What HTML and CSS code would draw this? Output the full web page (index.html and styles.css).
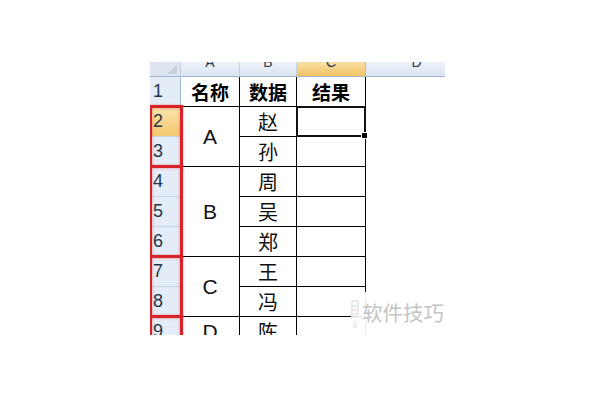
FILE: index.html
```html
<!DOCTYPE html>
<html lang="zh">
<head>
<meta charset="utf-8">
<link rel="stylesheet" href="styles.css">
</head>
<body>
<div class="page">
  <div class="sheet">
    <div class="grid">
      <div class="corner"><span class="tri"></span></div>
      <div class="ch"><span>A</span></div>
      <div class="ch"><span>B</span></div>
      <div class="ch sel"><span>C</span></div>
      <div class="ch"><span>D</span></div>

      <div class="rh">1</div>
      <div class="c head">名称</div>
      <div class="c head">数据</div>
      <div class="c head">结果</div>
      <div class="d"></div>

      <div class="rh sel grp g2">2</div>
      <div class="c m2">A</div>
      <div class="c">赵</div>
      <div class="c cur"></div>
      <div class="d"></div>

      <div class="rh">3</div>
      <div class="c">孙</div>
      <div class="c"></div>
      <div class="d"></div>

      <div class="rh grp g3">4</div>
      <div class="c m3">B</div>
      <div class="c">周</div>
      <div class="c"></div>
      <div class="d"></div>

      <div class="rh">5</div>
      <div class="c">吴</div>
      <div class="c"></div>
      <div class="d"></div>

      <div class="rh">6</div>
      <div class="c">郑</div>
      <div class="c"></div>
      <div class="d"></div>

      <div class="rh grp g2">7</div>
      <div class="c m2">C</div>
      <div class="c">王</div>
      <div class="c"></div>
      <div class="d"></div>

      <div class="rh">8</div>
      <div class="c">冯</div>
      <div class="c"></div>
      <div class="d"></div>

      <div class="rh grp g3">9</div>
      <div class="c m1">D</div>
      <div class="c">陈</div>
      <div class="c"></div>
      <div class="d"></div>
    </div>
  </div>
  <div class="wm">
    <svg class="wm-icon" width="8" height="30" viewBox="0 0 8 30">
      <rect x="1" y="1" width="6" height="16" fill="none" stroke="#d6d6d6" stroke-width="1"/>
      <line x1="2" y1="6" x2="6" y2="6" stroke="#d6d6d6"/>
      <line x1="2" y1="10" x2="6" y2="10" stroke="#d6d6d6"/>
      <line x1="2" y1="14" x2="6" y2="14" stroke="#d6d6d6"/>
      <line x1="3" y1="21" x2="3" y2="28" stroke="#e0e0e0"/>
      <line x1="5" y1="21" x2="5" y2="28" stroke="#e0e0e0"/>
    </svg>
    <span class="wm-text">软件技巧</span>
  </div>
</div>
</body>
</html>
```

FILE: styles.css
```css
html, body {
  margin: 0;
  padding: 0;
  background: #fff;
}
.page {
  position: relative;
  width: 600px;
  height: 400px;
  padding: 62px 0 0 150px;
  box-sizing: border-box;
}
.sheet {
  width: 295px;
  height: 273px;
  overflow: hidden;
}
.grid {
  display: grid;
  grid-template-columns: 31px 59px 57px 69px 102px;
  grid-template-rows: 15px repeat(9, 30px);
  font-family: "Noto Sans CJK SC", "Liberation Sans", sans-serif;
}
.corner {
  background: #dfe5ee;
  border-right: 1px solid #c3cfdf;
  border-bottom: 1px solid #9eb6ce;
  box-sizing: border-box;
  position: relative;
  overflow: hidden;
}
.tri {
  position: absolute;
  right: 3px;
  bottom: 2px;
  width: 0;
  height: 0;
  border-left: 10px solid transparent;
  border-bottom: 9px solid #c6d0dc;
}
.ch {
  background: linear-gradient(#eef3fa, #dae4f2);
  border-right: 1px solid #c3d1e3;
  border-bottom: 1px solid #9eb6ce;
  box-sizing: border-box;
  overflow: hidden;
  text-align: center;
  font-family: "Liberation Sans", sans-serif;
  font-size: 14px;
  color: #2c3a4c;
}
.ch span {
  display: block;
  line-height: 8px;
  margin-top: -4px;
}
.ch.sel {
  background: linear-gradient(#f9dea6, #f1c462);
  border-right-color: #e0b860;
}
.rh {
  background: #e4ecf7;
  border-right: 1px solid #9eb6ce;
  border-bottom: 1px solid #c3d1e3;
  box-sizing: border-box;
  font-family: "Liberation Sans", sans-serif;
  font-size: 18px;
  color: #243447;
  padding-left: 3px;
  display: flex;
  align-items: center;
}
.rh.sel {
  background: linear-gradient(#fbe4ad, #f4c96f);
}
.grp {
  position: relative;
}
.grp::after {
  content: "";
  position: absolute;
  left: 0;
  top: -2px;
  right: -3px;
  border: 3px solid #d8232a;
  border-left-width: 2px;
  box-shadow: inset 0 0 3px rgba(215, 60, 60, 0.55), 0 0 2px rgba(215, 60, 60, 0.45);
}
.g2::after { height: 59px; }
.g3::after { height: 89px; }
.c {
  border-right: 1px solid #000;
  border-bottom: 1px solid #000;
  box-sizing: border-box;
  display: flex;
  align-items: center;
  justify-content: center;
  font-size: 20px;
  color: #111;
}
.head {
  font-weight: 700;
  font-size: 19px;
  color: #000;
}
.m1 { grid-row: span 1; }
.m2 { grid-row: span 2; }
.m3 { grid-row: span 3; }
.m2, .m3, .m1 {
  font-family: "Liberation Sans", sans-serif;
  font-size: 21px;
}
.cur {
  position: relative;
  border: 2px solid #111;
  margin: -1px 0 0 -1px;
  box-shadow: inset 0 0 0 1px #fff;
}
.cur::after {
  content: "";
  position: absolute;
  right: -4px;
  bottom: -4px;
  width: 5px;
  height: 5px;
  background: #000;
  border: 1px solid #fff;
}
.d {
  background: #fff;
}
.wm {
  position: absolute;
  left: 351px;
  top: 292px;
  width: 100px;
  height: 44px;
  background: rgba(255, 255, 255, 0.93);
  display: flex;
  align-items: flex-start;
  gap: 3px;
  padding-top: 8px;
  box-sizing: border-box;
}
.wm-icon {
  display: block;
}
.wm-text {
  font-family: "Noto Sans CJK SC", sans-serif;
  font-size: 20.5px;
  line-height: 24px;
  color: #c4c4c4;
}
```
